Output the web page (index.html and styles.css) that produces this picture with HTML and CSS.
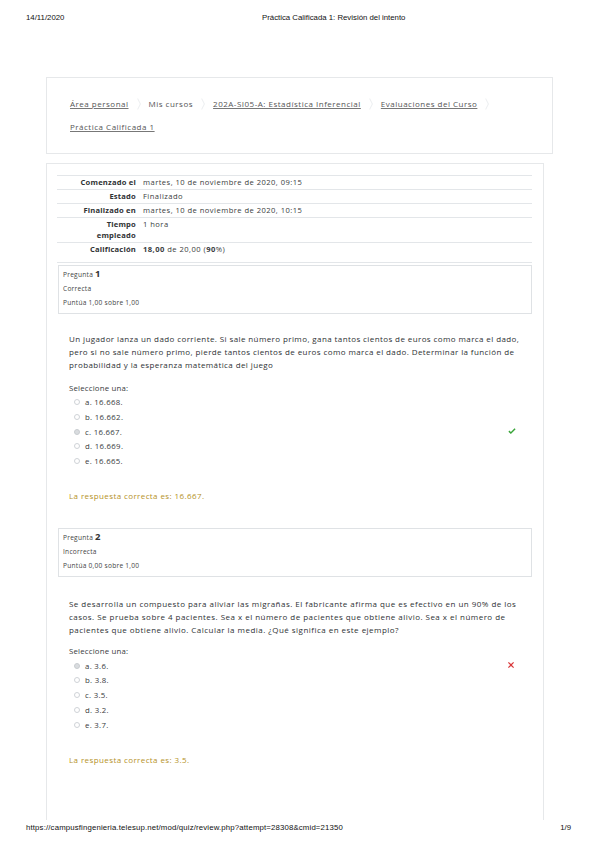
FILE: index.html
```html
<!DOCTYPE html>
<html lang="es">
<head>
<meta charset="utf-8">
<title>Práctica Calificada 1: Revisión del intento</title>
<link rel="stylesheet" href="styles.css">
</head>
<body>
<div class="page">
  <header class="print-head">
    <span class="date">14/11/2020</span>
    <span class="title">Práctica Calificada 1: Revisión del intento</span>
  </header>

  <nav class="card crumbs">
    <div class="crumb-line">
      <a class="crumb link">Área personal</a>
      <svg class="sep" viewBox="0 0 5 14" width="4" height="14"><polygon points="0,0 1.5,0 5,7 1.5,14 0,14 3.5,7"/></svg>
      <span class="crumb">Mis cursos</span>
      <svg class="sep" viewBox="0 0 5 14" width="4" height="14"><polygon points="0,0 1.5,0 5,7 1.5,14 0,14 3.5,7"/></svg>
      <a class="crumb link">202A-SI05-A: Estadística Inferencial</a>
      <svg class="sep" viewBox="0 0 5 14" width="4" height="14"><polygon points="0,0 1.5,0 5,7 1.5,14 0,14 3.5,7"/></svg>
      <a class="crumb link">Evaluaciones del Curso</a>
      <svg class="sep" viewBox="0 0 5 14" width="4" height="14"><polygon points="0,0 1.5,0 5,7 1.5,14 0,14 3.5,7"/></svg>
    </div>
    <div class="crumb-line">
      <a class="crumb link">Práctica Calificada 1</a>
    </div>
  </nav>

  <main class="card review">
    <table class="summary">
      <tr><th>Comenzado el</th><td>martes, 10 de noviembre de 2020, 09:15</td></tr>
      <tr><th>Estado</th><td>Finalizado</td></tr>
      <tr><th>Finalizado en</th><td>martes, 10 de noviembre de 2020, 10:15</td></tr>
      <tr><th>Tiempo<br>empleado</th><td>1 hora</td></tr>
      <tr><th>Calificación</th><td><b>18,00</b> de 20,00 (<b>90</b>%)</td></tr>
    </table>

    <section class="question">
      <div class="qinfo">
        <div class="qno">Pregunta <b>1</b></div>
        <div class="qstate">Correcta</div>
        <div class="qgrade">Puntúa 1,00 sobre 1,00</div>
      </div>
      <div class="qcontent">
        <p class="qtext">Un jugador lanza un dado corriente. Si sale número primo, gana tantos cientos de euros como marca el dado,<br>pero si no sale número primo, pierde tantos cientos de euros como marca el dado. Determinar la función de<br>probabilidad y la esperanza matemática del juego</p>
        <div class="prompt">Seleccione una:</div>
        <ul class="answers">
          <li><span class="radio"></span>a. 16.668.</li>
          <li><span class="radio"></span>b. 16.662.</li>
          <li><span class="radio checked"></span>c. 16.667.<svg class="mark" viewBox="0 0 10 8" width="8" height="7"><path d="M0.5 4.2 L3.6 7.2 L9.5 1.2 L8.2 0 L3.6 4.7 L1.8 2.9 Z" fill="#3aa53a"/></svg></li>
          <li><span class="radio"></span>d. 16.669.</li>
          <li><span class="radio"></span>e. 16.665.</li>
        </ul>
        <div class="rightanswer">La respuesta correcta es: 16.667.</div>
      </div>
    </section>

    <section class="question">
      <div class="qinfo">
        <div class="qno">Pregunta <b>2</b></div>
        <div class="qstate">Incorrecta</div>
        <div class="qgrade">Puntúa 0,00 sobre 1,00</div>
      </div>
      <div class="qcontent">
        <p class="qtext qtext-late">Se desarrolla un compuesto para aliviar las migrañas. El fabricante afirma que es efectivo en un 90% de los<br>casos. Se prueba sobre 4 pacientes. Sea x el número de pacientes que obtiene alivio. Sea x el número de<br>pacientes que obtiene alivio. Calcular la media. ¿Qué significa en este ejemplo?</p>
        <div class="prompt prompt-near">Seleccione una:</div>
        <ul class="answers">
          <li><span class="radio checked"></span>a. 3.6.<svg class="mark" viewBox="0 0 8 8" width="6" height="6"><path d="M1 0 L4 2.8 L7 0 L8 1 L5.2 4 L8 7 L7 8 L4 5.2 L1 8 L0 7 L2.8 4 L0 1 Z" fill="#d9383a"/></svg></li>
          <li><span class="radio"></span>b. 3.8.</li>
          <li><span class="radio"></span>c. 3.5.</li>
          <li><span class="radio"></span>d. 3.2.</li>
          <li><span class="radio"></span>e. 3.7.</li>
        </ul>
        <div class="rightanswer">La respuesta correcta es: 3.5.</div>
      </div>
    </section>
  </main>

  <footer class="print-foot">
    <span class="url">https://campusfingenieria.telesup.net/mod/quiz/review.php?attempt=28308&amp;cmid=21350</span>
    <span>1/9</span>
  </footer>
</div>
</body>
</html>
```
FILE: styles.css
```css
* { box-sizing: border-box; }
html, body { margin: 0; padding: 0; background: #fff; }
body {
  font-family: "Open Sans", "Liberation Sans", sans-serif;
  color: #373a3c;
}
.page {
  width: 599px;
  height: 848px;
  display: flex;
  flex-direction: column;
  overflow: hidden;
}
.print-head, .print-foot {
  font-family: "Liberation Sans", Arial, sans-serif;
  font-size: 7.8px;
  line-height: 10px;
  color: #111;
  display: flex;
  padding: 0 26px 0 26px;
}
.print-head { padding-top: 13px; height: 77px; flex: none; }
.print-head .date { width: 236px; flex: none; }
.print-foot {
  justify-content: space-between;
  padding-top: 3px;
  padding-right: 28px;
  height: 28px;
  flex: none;
}
.print-foot .url { letter-spacing: 0.15px; }

.card {
  border: 1px solid #e6e8ea;
  margin-left: 46px;
  background: #fff;
}
.crumbs {
  width: 507px;
  height: 77px;
  padding: 14px 10px 0 23px;
  font-size: 8px;
  letter-spacing: 0.5px;
  color: #555;
  flex: none;
}
.crumb-line {
  display: flex;
  align-items: center;
  height: 23px;
}
.crumb { color: #555; white-space: nowrap; }
.crumb.link { text-decoration: underline; text-decoration-color: #777; }
.sep {
  fill: #eef0f2;
  margin: 0 8px 0 8px;
  flex: none;
}
.review {
  width: 498px;
  margin-top: 9px;
  flex: 1;
  border-bottom: none;
  padding: 11px 11px 0 10px;
  overflow: hidden;
}
.summary {
  width: 100%;
  border-collapse: collapse;
  font-size: 7.6px;
  letter-spacing: 0.45px;
  line-height: 11px;
  border-top: 1px solid #e3e6e9;
  border-bottom: 1px solid #e3e6e9;
  margin-bottom: 2px;
}
.summary tr { border-bottom: 1px solid #e3e6e9; }
.summary tr:last-child { border-bottom: none; }
.summary tr:last-child td, .summary tr:last-child th { padding-bottom: 7px; }
.summary th {
  width: 84px;
  text-align: right;
  font-weight: 700;
  letter-spacing: 0.2px;
  padding: 1px 5px 1px 0;
  vertical-align: top;
  color: #2f3234;
}
.summary td {
  padding: 1px 0 1px 2px;
  vertical-align: top;
  color: #3a3d40;
}
.summary td b { font-weight: 700; }

.question { margin-left: 1px; }
.qinfo {
  border: 1px solid #dfe2e5;
  height: 49px;
  padding: 1px 4px 0 4px;
  font-size: 6.6px;
  letter-spacing: 0.25px;
  line-height: 14px;
  color: #444;
}
.qno b { font-size: 9.5px; font-weight: 700; color: #333; }
.qcontent { padding-left: 11px; }
.qtext {
  margin: 18px 0 0 0;
  font-size: 8px;
  letter-spacing: 0.4px;
  line-height: 13px;
  color: #2e3134;
  white-space: nowrap;
}
.qtext-late { margin-top: 20px; letter-spacing: 0.47px; }
.prompt {
  margin-top: 11px;
  font-size: 7.8px;
  letter-spacing: 0.2px;
  line-height: 13px;
}
.prompt-near { margin-top: 9px; }
.answers {
  list-style: none;
  margin: 0;
  padding: 0 0 0 5px;
  font-size: 7.8px;
  letter-spacing: 0.3px;
}
.answers li {
  display: flex;
  align-items: center;
  height: 14.7px;
  position: relative;
}
.radio {
  width: 6px;
  height: 6px;
  border: 1px solid #cfd3d7;
  border-radius: 50%;
  margin-right: 5px;
  background: #fff;
}
.radio.checked { background: #d9dcdf; border-color: #c8ccd0; }
.mark {
  position: absolute;
  left: 434px;
  top: 4px;
}
.rightanswer {
  margin-top: 21px;
  font-size: 8px;
  letter-spacing: 0.4px;
  line-height: 13px;
  color: #b5921f;
  margin-bottom: 26px;
}
```
